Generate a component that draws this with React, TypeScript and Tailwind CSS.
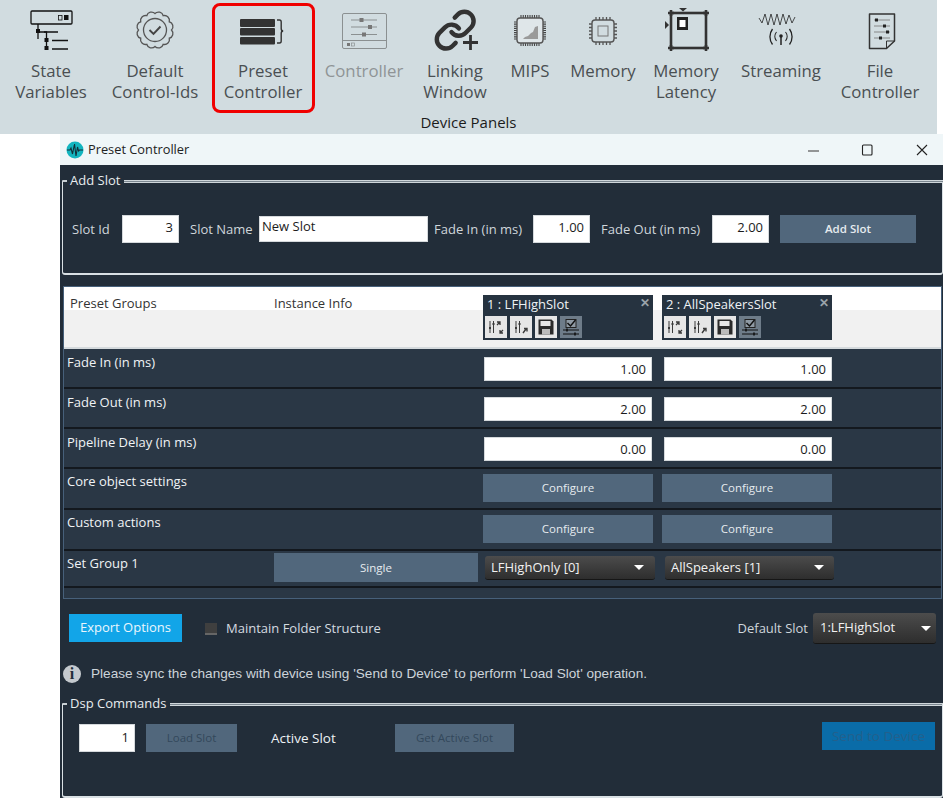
import type { ReactNode } from 'react';

const UI_FONT = 'font-["Open_Sans",sans-serif]';

// ---- ribbon icons (all drawn in a 60x44 box) ----

function StateVariablesIcon() {
  return (
    <svg width="60" height="44" viewBox="0 0 60 44" fill="none" stroke="#111" strokeWidth="1.3">
      <rect x="10" y="3" width="41" height="13" rx="1" />
      <rect x="37.5" y="7.5" width="3.5" height="4.5" strokeWidth="0.8" />
      <rect x="43" y="7" width="4.5" height="5" fill="#111" stroke="none" />
      <path d="M17 16v15M17 31h0M17 24h8.5v10" />
      <rect x="15" y="21" width="4" height="4" fill="#111" stroke="none" />
      <path d="M23 24h14M31 32.500h16M31 41h16" strokeWidth="1.4" />
      <rect x="23.500" y="30" width="4" height="4" fill="#111" stroke="none" />
      <rect x="23.500" y="38" width="4" height="4" fill="#111" stroke="none" />
      <path d="M25.500 34v5" />
    </svg>
  );
}

function gearPath(cx: number, cy: number, r: number, lobes: number) {
  const pts: string[] = [];
  for (let i = 0; i <= lobes; i++) {
    const a = (i / lobes) * Math.PI * 2;
    const x = (cx + r * Math.cos(a)).toFixed(2);
    const y = (cy + r * Math.sin(a)).toFixed(2);
    pts.push(i === 0 ? `M${x} ${y}` : `A${(r * 0.3).toFixed(2)} ${(r * 0.3).toFixed(2)} 0 0 1 ${x} ${y}`);
  }
  return pts.join('') + 'Z';
}

function DefaultIdsIcon() {
  return (
    <svg width="60" height="44" viewBox="0 0 60 44" fill="none" stroke="#555" strokeWidth="1.3">
      <path d={gearPath(30, 22, 16.500, 12)} />
      <circle cx="30" cy="22" r="11.500" />
      <path d="M24.500 22l4 4 7-7.500" strokeWidth="1.900" stroke="#444" />
    </svg>
  );
}

function PresetIcon() {
  return (
    <svg width="60" height="44" viewBox="0 0 60 44" fill="#333">
      <rect x="7" y="11" width="35" height="8" rx="1" />
      <rect x="7" y="20" width="35" height="7.500" rx="1" />
      <rect x="7" y="29" width="35" height="7.500" rx="1" />
      <path d="M44 12h2.500c1.200 0 1.700.8 1.700 2v6.500c0 1 .6 2.500 2 2.500-1.400 0-2 1.500-2 2.500V33c0 1.500-.6 2-1.700 2H44" fill="none" stroke="#333" strokeWidth="1.400" />
    </svg>
  );
}

function ControllerIcon() {
  return (
    <svg width="60" height="44" viewBox="0 0 60 44" fill="none" stroke="#8b9091" strokeWidth="1">
      <rect x="8.500" y="5.500" width="44" height="35" rx="1.500" />
      <path d="M8.500 32.500h44" />
      <path d="M17 12h26M17 19h26M17 26.500h26" />
      <rect x="25.500" y="10" width="4" height="4" fill="#777" stroke="none" />
      <rect x="34" y="17" width="4" height="4" fill="#777" stroke="none" />
      <rect x="28" y="24.500" width="4" height="4" fill="#777" stroke="none" />
      <rect x="13" y="35" width="3" height="3" fill="#777" stroke="none" />
      <rect x="17.500" y="35" width="3" height="3" strokeWidth="0.7" />
    </svg>
  );
}

function LinkingIcon() {
  return (
    <svg width="60" height="44" viewBox="0 0 60 44" fill="none" stroke="#333">
      <g transform="translate(8 0) scale(1.850)" strokeWidth="2.400" strokeLinecap="round" strokeLinejoin="round">
        <path d="M10 13a5 5 0 0 0 7.540.54l3-3a5 5 0 0 0-7.070-7.070l-1.720 1.710" />
        <path d="M14 11a5 5 0 0 0-7.540-.54l-3 3a5 5 0 0 0 7.070 7.070l1.710-1.710" />
      </g>
      <path d="M38 34.500h15M45.500 27v15" strokeWidth="6" stroke="#d1dce0" />
      <path d="M38 34.500h15M45.500 27v15" strokeWidth="2.800" />
    </svg>
  );
}

function chipPins(x0: number, x1: number, y0: number, y1: number, n: number) {
  const d: string[] = [];
  for (let i = 0; i < n; i++) {
    const px = x0 + 4 + ((x1 - x0 - 8) * i) / (n - 1);
    const py = y0 + 4 + ((y1 - y0 - 8) * i) / (n - 1);
    d.push(`M${px} ${y0 - 3}v3M${px} ${y1}v3M${x0 - 3} ${py}h3M${x1} ${py}h3`);
  }
  return d.join('');
}

function MipsIcon() {
  return (
    <svg width="60" height="44" viewBox="0 0 60 44" fill="none" stroke="#444">
      <path d={chipPins(17, 43, 10, 35, 9)} strokeWidth="1.100" />
      <rect x="17" y="10" width="26" height="25" rx="3" strokeWidth="1.400" stroke="#555" fill="#dfe6e9" />
      <path d="M23 31l2-2 3-1 3-3 2-1 2-5 3-1v13z" fill="#9a9a9a" stroke="none" />
    </svg>
  );
}

function MemoryIcon() {
  return (
    <svg width="60" height="44" viewBox="0 0 60 44" fill="none" stroke="#555">
      <path d={chipPins(19, 41, 12, 34, 5)} strokeWidth="1.300" />
      <rect x="19" y="12" width="22" height="22" rx="3" strokeWidth="1.400" />
      <rect x="25" y="18" width="10" height="10" strokeWidth="1" stroke="#777" />
    </svg>
  );
}

function LatencyIcon() {
  return (
    <svg width="60" height="44" viewBox="0 0 60 44" fill="none" stroke="#333">
      <rect x="15" y="5" width="35" height="35" strokeWidth="2.600" />
      <path d="M12 5h6M47 5h6M12 40h6M47 40h6M15 2v6M50 2v6M15 37v6M50 37v6" strokeWidth="2.600" />
      <rect x="21" y="9" width="11" height="13" fill="#222" stroke="none" />
      <rect x="23.500" y="12" width="6" height="7" fill="#fff" stroke="none" />
      <path d="M23 0h8l-4 3.500z M9 13v8l4-4z" fill="#333" stroke="none" />
    </svg>
  );
}

function StreamingIcon() {
  return (
    <svg width="60" height="44" viewBox="0 0 60 44" fill="none" stroke="#222" strokeWidth="1">
      <path d="M8 10l3 5 3-9 3 11 3-11 3 11 3-11 3 11 3-11 3 10 3-9 3 8 3-6" strokeWidth="0.800" />
      <path d="M30 44V36" strokeWidth="1.500" transform="translate(0 -7)" />
      <circle cx="30" cy="28" r="1.800" fill="#222" stroke="none" />
      <path d="M25.500 24a7 7 0 0 0 0 9M34.500 24a7 7 0 0 1 0 9" strokeWidth="1.100" />
      <path d="M21.500 21a13 13 0 0 0 0 15.500M38.500 21a13 13 0 0 1 0 15.500" strokeWidth="1.300" />
    </svg>
  );
}

function FileIcon() {
  return (
    <svg width="60" height="44" viewBox="0 0 60 44" fill="none" stroke="#333">
      <path d="M19.500 6h25v27l-8 7.500h-17z" strokeWidth="1.500" strokeLinejoin="round" />
      <path d="M36.500 40.500V33h8" strokeWidth="1" />
      <path d="M24 12h16M24 18h16M24 24h16M24 30h16" stroke="#888" strokeWidth="1.200" />
      <rect x="25" y="10.500" width="3" height="3" fill="#222" stroke="none" />
      <rect x="33" y="16.500" width="3" height="3" fill="#222" stroke="none" />
      <rect x="36" y="22.500" width="3" height="3" fill="#222" stroke="none" />
      <rect x="29" y="28.500" width="3" height="3" fill="#222" stroke="none" />
    </svg>
  );
}

const ribbonItems = [
  { w: 'w-[102px]', icon: <StateVariablesIcon />, lines: ['State', 'Variables'] },
  { w: 'w-[106px]', icon: <DefaultIdsIcon />, lines: ['Default', 'Control-Ids'] },
  { w: 'w-[110px]', icon: <PresetIcon />, lines: ['Preset', 'Controller'], selected: true },
  { w: 'w-[92px]', icon: <ControllerIcon />, lines: ['Controller'], disabled: true },
  { w: 'w-[90px]', icon: <LinkingIcon />, lines: ['Linking', 'Window'] },
  { w: 'w-[60px]', icon: <MipsIcon />, lines: ['MIPS'] },
  { w: 'w-[86px]', icon: <MemoryIcon />, lines: ['Memory'] },
  { w: 'w-[80px]', icon: <LatencyIcon />, lines: ['Memory', 'Latency'] },
  { w: 'w-[110px]', icon: <StreamingIcon />, lines: ['Streaming'] },
  { w: 'w-[88px]', icon: <FileIcon />, lines: ['File', 'Controller'] },
];

function Ribbon() {
  return (
    <div className="h-[134px] w-[937px] bg-[#d1dce0]">
      <div className="flex h-[113px]">
        {ribbonItems.map((item) => (
          <div key={item.lines.join(' ')} className={`relative flex flex-col items-center pt-[8px] ${item.w}`}>
            {item.icon}
            <div
              className={`mt-[8px] whitespace-nowrap text-center text-[16.800px] leading-[21px] ${
                item.disabled ? 'text-[#8f9496]' : 'text-[#4a4f52]'
              }`}
            >
              {item.lines.map((line) => (
                <div key={line}>{line}</div>
              ))}
            </div>
            {item.selected && (
              <div className="absolute bottom-0 left-[4px] right-[3px] top-[3px] rounded-[8px] border-[3px] border-[#f00000]" />
            )}
          </div>
        ))}
      </div>
      <div className="text-center text-[15px] leading-[19px] text-[#1b1b1b]">Device Panels</div>
    </div>
  );
}

// ---- window chrome ----

function TitleBar() {
  return (
    <div className="flex h-[31px] items-center bg-[#eff6f8] pl-[6px]">
      <svg width="18" height="18" viewBox="0 0 18 18" fill="none">
        <circle cx="9" cy="9" r="8.500" fill="#13b5bf" />
        <path d="M1 9h3l1-2 1.500 6L8.500 3l1.500 12L11.500 6l1 4 1-1h3.500" stroke="#12303a" strokeWidth="1.100" />
      </svg>
      <span className="ml-[4px] text-[12.800px] text-[#222]">Preset Controller</span>
      <div className="ml-auto flex items-center text-[#333]">
        <svg width="12" height="12" viewBox="0 0 12 12" stroke="#555" strokeWidth="1.200">
          <path d="M0 7h11" />
        </svg>
        <svg className="ml-[41px]" width="12" height="12" viewBox="0 0 12 12" fill="none" stroke="#222" strokeWidth="1.100">
          <rect x="1.500" y="1" width="9.500" height="10" rx="1" />
        </svg>
        <svg className="ml-[43px] mr-[15px]" width="12" height="12" viewBox="0 0 12 12" stroke="#222" strokeWidth="1.100">
          <path d="M1 1l10 10M11 1L1 11" />
        </svg>
      </div>
    </div>
  );
}

function GroupBox({ title, className, children }: { title: string; className: string; children: ReactNode }) {
  return (
    <div className="pl-[2px]">
      <div className="flex h-[16px] items-center">
        <span className="mt-[2px] h-[2px] w-[5px] rounded-l bg-[#c9d0d4]" />
        <span className="-mt-[1px] ml-[3px] mr-[4px] text-[13px] leading-[16px] text-[#e8ecef]">{title}</span>
        <span className="mt-[2px] h-[3px] flex-1 border-y border-[#cfd6da] bg-[#7c8790]" />
      </div>
      <div className={`-mt-[7px] rounded-b-[3px] border-x border-b-2 border-[#d9e0e4] ${className}`}>{children}</div>
    </div>
  );
}

function NumberBox({ value, className }: { value: string; className: string }) {
  return (
    <input
      readOnly
      value={value}
      className={`border border-[#d5d9dc] bg-white pr-[5px] text-right text-[13px] text-[#1c1c1c] outline-none ${className}`}
    />
  );
}

function FlatButton({ label, className }: { label: string; className: string }) {
  return (
    <button className={`flex items-center justify-center bg-[#51677c] text-[11.500px] ${className}`}>{label}</button>
  );
}

function Dropdown({ label, className }: { label: string; className: string }) {
  return (
    <div
      className={`flex items-center justify-between rounded-[3px] border-b border-[#161616] bg-gradient-to-b from-[#4c4c4c] to-[#2e2e2e] text-[13px] text-[#f2f2f2] ${className}`}
    >
      <span>{label}</span>
      <span className="h-0 w-0 border-x-[5px] border-t-[5px] border-x-transparent border-t-white" />
    </div>
  );
}

function AddSlotGroup() {
  const label = 'mt-[6px] text-[13px] text-[#cfd6db]';
  const box = 'mt-[3px] h-[28px] w-[57px] pb-[3px]';
  return (
    <GroupBox title="Add Slot" className="flex h-[94px] items-center pl-[9px]">
      <span className={`w-[50px] ${label}`}>Slot Id</span>
      <NumberBox value="3" className={box} />
      <span className={`ml-[11px] w-[69px] ${label}`}>Slot Name</span>
      <input
        readOnly
        value="New Slot"
        className="mt-[3px] h-[26px] w-[169px] border border-[#d5d9dc] bg-white pb-[5px] pl-[2px] text-[13px] text-[#1c1c1c] outline-none"
      />
      <span className={`ml-[6px] w-[99px] ${label}`}>Fade In (in ms)</span>
      <NumberBox value="1.00" className={box} />
      <span className={`ml-[11px] w-[111px] ${label}`}>Fade Out (in ms)</span>
      <NumberBox value="2.00" className={box} />
      <FlatButton label="Add Slot" className="ml-[11px] mt-[3px] h-[28px] w-[136px] font-semibold text-[#e6ebef]" />
    </GroupBox>
  );
}

// ---- preset table ----

function SlotTool({ kind }: { kind: 'load' | 'store' | 'save' | 'apply' }) {
  const dark = kind === 'apply';
  return (
    <span className={`flex h-[22px] w-[22px] items-center justify-center ${dark ? 'bg-[#6e7c89]' : 'bg-[#e6e6e6]'}`}>
      <svg width="18" height="18" viewBox="0 0 18 18" fill="none" stroke="#3a3a3a" strokeWidth="1">
        {kind === 'load' && (
          <>
            <path d="M3 3v12M6.500 3v12" />
            <path d="M2 10h2M5.500 6h2" strokeWidth="2.200" />
            <path d="M10 7l3-3M10 4h3v3M16 12l-3 3M13 12v3h3" strokeWidth="1.300" />
          </>
        )}
        {kind === 'store' && (
          <>
            <path d="M4 3v12M7.500 3v12" />
            <path d="M3 10h2M6.500 6h2" strokeWidth="2.200" />
            <path d="M11 15l3-4M12 10.500h3v3" strokeWidth="1.400" />
          </>
        )}
        {kind === 'save' && (
          <>
            <path d="M1.500 1.500h13l2 2v13h-15z" fill="#2a2a2a" stroke="none" />
            <rect x="3.500" y="3" width="10" height="5" fill="#e6e6e6" stroke="none" />
            <rect x="5" y="11" width="8" height="5.500" fill="#bbb" stroke="none" />
          </>
        )}
        {kind === 'apply' && (
          <>
            <rect x="4" y="1.500" width="10" height="8" fill="#8f9aa4" stroke="#222" />
            <path d="M5.500 5l3 3 5-6" stroke="#111" strokeWidth="1.500" />
            <path d="M1 12h16M1 16h16" stroke="#111" />
            <path d="M5 10.500v3M13 14.500v3" stroke="#111" strokeWidth="1.600" />
          </>
        )}
      </svg>
    </span>
  );
}

function SlotHeader({ title }: { title: string }) {
  return (
    <div className="relative mt-[8px] h-[45px] w-[170px] bg-[#263340] pl-[4px]">
      <div className="text-[13px] leading-[19px] text-[#eef2f5]">{title}</div>
      <span className="absolute right-[3px] top-[2px] text-[12px] font-bold leading-[12px] text-[#9aa3aa]">✕</span>
      <div className="-ml-[2px] mt-[2px] flex gap-[3px]">
        <SlotTool kind="load" />
        <SlotTool kind="store" />
        <SlotTool kind="save" />
        <SlotTool kind="apply" />
      </div>
    </div>
  );
}

function TableRow({ label, height, labelTop, middle, children }: { label?: string; height: string; labelTop: string; middle?: ReactNode; children?: ReactNode }) {
  return (
    <div className={`flex border-b-2 border-[#13181e] ${height}`}>
      <div className={`w-[210px] pl-[3px] text-[13px] leading-[20px] text-[#f0f3f5] ${labelTop}`}>{label}</div>
      <div className="w-[209px]">{middle}</div>
      {children}
    </div>
  );
}

function Cell({ children }: { children: ReactNode }) {
  return <div className="w-[179px]">{children}</div>;
}

function FadeRow({ label, a, b }: { label: string; a: string; b: string }) {
  return (
    <TableRow label={label} height="h-[40px]" labelTop="pt-[3px]">
      <Cell>
        <NumberBox value={a} className="ml-[1px] mt-[8px] h-[24px] w-[168px]" />
      </Cell>
      <Cell>
        <NumberBox value={b} className="ml-[2px] mt-[8px] h-[24px] w-[168px]" />
      </Cell>
    </TableRow>
  );
}

function ConfigureRow({ label }: { label: string }) {
  const btn = 'mt-[5px] h-[28px] w-[170px] text-[#e6ebef]';
  return (
    <TableRow label={label} height="h-[41px]" labelTop="pt-[2px]">
      <Cell>
        <FlatButton label="Configure" className={btn} />
      </Cell>
      <Cell>
        <FlatButton label="Configure" className={btn} />
      </Cell>
    </TableRow>
  );
}

function PresetTable() {
  return (
    <div className="ml-[3px] mr-[1px] mt-[11px] border border-[#47607a] bg-[#2a3745]">
      <div className="flex h-[62px] border-b-2 border-[#d5dadd] bg-gradient-to-b from-white from-[38%] to-[#f1f1f1] to-[38%] text-[13px] text-[#333]">
        <div className="w-[210px] pl-[6px] pt-[7px]">Preset Groups</div>
        <div className="w-[209px] pt-[7px]">Instance Info</div>
        <Cell>
          <SlotHeader title="1 : LFHighSlot" />
        </Cell>
        <Cell>
          <SlotHeader title="2 : AllSpeakersSlot" />
        </Cell>
      </div>
      <FadeRow label="Fade In (in ms)" a="1.00" b="1.00" />
      <FadeRow label="Fade Out (in ms)" a="2.00" b="2.00" />
      <FadeRow label="Pipeline Delay (in ms)" a="0.00" b="0.00" />
      <ConfigureRow label="Core object settings" />
      <ConfigureRow label="Custom actions" />
      <TableRow
        label="Set Group 1"
        height="h-[37px]"
        labelTop="pt-[2px]"
        middle={<FlatButton label="Single" className="mt-[2px] h-[29px] w-[204px] text-[#e6ebef]" />}
      >
        <Cell>
          <Dropdown label="LFHighOnly [0]" className="ml-[2px] mt-[5px] h-[24px] w-[170px] pl-[6px] pr-[11px]" />
        </Cell>
        <Cell>
          <Dropdown label="AllSpeakers [1]" className="ml-[3px] mt-[5px] h-[24px] w-[169px] pl-[6px] pr-[10px]" />
        </Cell>
      </TableRow>
      <div className="h-[10px]" />
    </div>
  );
}

function ExportRow() {
  return (
    <div className="mt-[14px] flex h-[31px] items-center pl-[9px] pr-[7px]">
      <button className="-mt-[2px] flex h-[28px] w-[113px] items-center justify-center bg-[#12a5e8] text-[13px] text-[#eaf6fd]">
        Export Options
      </button>
      <span className="ml-[23px] h-[12px] w-[12px] border-b-2 border-[#666] bg-[#3f3f3f]" />
      <span className="ml-[9px] text-[13px] text-[#d5dbe0]">Maintain Folder Structure</span>
      <span className="ml-auto mr-[5px] text-[13px] text-[#cfd6db]">Default Slot</span>
      <Dropdown label="1:LFHighSlot" className="h-[31px] w-[123px] pl-[7px] pr-[5px]" />
    </div>
  );
}

function InfoRow() {
  return (
    <div className="mt-[20px] flex h-[20px] items-center pl-[3px]">
      <span className="flex h-[18px] w-[18px] items-center justify-center rounded-full bg-[#c4c9ce] font-['Liberation_Serif',serif] text-[16px] font-bold leading-none text-[#222d39]">
        i
      </span>
      <span className="ml-[10px] font-['Liberation_Sans',sans-serif] text-[13.600px] text-[#cdd4da]">
        Please sync the changes with device using 'Send to Device' to perform 'Load Slot' operation.
      </span>
    </div>
  );
}

function DspGroup() {
  const disabled = 'h-[28px] text-[#33475b]';
  return (
    <GroupBox title="Dsp Commands" className="relative h-[94px] pl-[16px] pt-[20px]">
      <div className="flex items-center">
        <NumberBox value="1" className="h-[28px] w-[56px] pb-[3px]" />
        <FlatButton label="Load Slot" className={`ml-[11px] w-[91px] ${disabled}`} />
        <span className="ml-[34px] w-[124px] text-[13.500px] text-[#eef2f5]">Active Slot</span>
        <FlatButton label="Get Active Slot" className={`w-[119px] ${disabled}`} />
        <button className="-mt-[4px] ml-auto mr-[7px] flex h-[28px] w-[113px] items-center justify-center bg-[#0a6ca8] text-[13.500px] text-[#23608c]">
          Send to Device
        </button>
      </div>
    </GroupBox>
  );
}

export default function App() {
  return (
    <div className={`h-[804px] w-[948px] overflow-hidden bg-white ${UI_FONT}`}>
      <Ribbon />
      <div className="ml-[60px] w-[883px]">
        <TitleBar />
        <div className="h-[633px] bg-[#222d39] pt-[7px]">
          <AddSlotGroup />
          <PresetTable />
          <ExportRow />
          <InfoRow />
          <div className="mt-[11px]">
            <DspGroup />
          </div>
        </div>
      </div>
    </div>
  );
}
